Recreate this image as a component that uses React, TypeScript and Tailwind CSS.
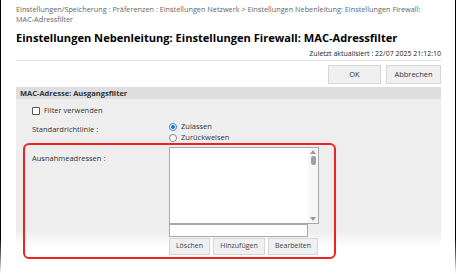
import React from "react";

function Btn({ children, className = "" }: { children: React.ReactNode; className?: string }) {
  return (
    <div
      className={
        "flex items-center justify-center border border-[#d6d6d6] bg-[#f0f0f0] text-[#333] " + className
      }
    >
      {children}
    </div>
  );
}

export default function App() {
  return (
    <div
      className="relative w-[456px] h-[274px] overflow-hidden bg-white text-[#222]"
      style={{ fontFamily: '"Open Sans", "Noto Sans", sans-serif' }}
    >
      {/* frame edges that fade at the bottom */}
      <div className="absolute left-0 top-0 w-px h-full bg-linear-to-b from-black from-85% to-white" />
      <div className="absolute right-0 top-0 w-px h-full bg-linear-to-b from-black from-85% to-white" />

      <div className="pl-[16px] pr-[15px] pt-[4px]">
        <div className="text-[7.3px] leading-[10px] text-[#666]">
          Einstellungen/Speicherung : Präferenzen : Einstellungen Netzwerk &gt; Einstellungen Nebenleitung: Einstellungen Firewall:
          <br />
          MAC-Adressfilter
        </div>
        <div className="mt-[7px] text-[11.1px] leading-[14px] font-bold text-black">
          Einstellungen Nebenleitung: Einstellungen Firewall: MAC-Adressfilter
        </div>
        <div className="mt-[4px] flex justify-end text-[7px] leading-[9px] text-[#222]">
          Zuletzt aktualisiert : 22/07 2025 21:12:10
        </div>
        <div className="mt-[2px] h-px bg-[#e0e0e0]" />
        <div className="mt-[4px] flex justify-end gap-[5px]">
          <Btn className="w-[53px] h-[19px] text-[7.5px]">OK</Btn>
          <Btn className="w-[55px] h-[19px] text-[7.5px]">Abbrechen</Btn>
        </div>

        <div className="mt-[3px] h-[160px] bg-linear-to-b from-[#eeeeee] from-90% to-white">
          <div className="h-[12px] bg-[#dedede] pl-[4px] text-[7.5px] leading-[12px] font-bold text-[#333]">
            MAC-Adresse: Ausgangsfilter
          </div>
          <div className="pl-[16px] pt-[7px] text-[7.5px] text-[#333]">
            <div className="flex items-center gap-[4px] h-[10px]">
              <div className="w-[8px] h-[8px] border border-[#555] bg-white rounded-[1px]" />
              <span>Filter verwenden</span>
            </div>
            <div className="mt-[5px] flex">
              <div className="w-[137px] pt-[3px] leading-[10px]">Standardrichtlinie :</div>
              <div className="flex flex-col leading-[11px]">
                <div className="flex items-center gap-[4px]">
                  <div className="w-[8px] h-[8px] rounded-full border border-[#3b82d6] bg-white flex items-center justify-center">
                    <div className="w-[4px] h-[4px] rounded-full bg-[#1a73d9]" />
                  </div>
                  <span>Zulassen</span>
                </div>
                <div className="flex items-center gap-[4px]">
                  <div className="w-[8px] h-[8px] rounded-full border border-[#888] bg-white" />
                  <span>Zurückweisen</span>
                </div>
              </div>
            </div>
          </div>

          <div className="ml-[7px] mt-[0px] w-[313px] h-[116px] rounded-[6px] border-2 border-[#ee2222] flex pl-[7px] pt-[2px]">
            <div className="w-[137px] pt-[6px] text-[7.5px] leading-[10px] text-[#333]">Ausnahmeadressen :</div>
            <div className="flex flex-col">
              <div className="w-[150px] h-[77px] border border-[#a8a8a8] bg-white flex justify-end">
                <div className="w-[10px] h-full bg-[#f7f7f7] flex flex-col items-center justify-between py-[2px]">
                  <div className="flex flex-col items-center gap-[2px]">
                    <div className="w-0 h-0 border-l-[3px] border-r-[3px] border-b-[4px] border-l-transparent border-r-transparent border-b-[#999]" />
                    <div className="w-[5px] h-[9px] rounded-[2px] bg-[#a0a0a0]" />
                  </div>
                  <div className="w-0 h-0 border-l-[3px] border-r-[3px] border-t-[4px] border-l-transparent border-r-transparent border-t-[#999]" />
                </div>
              </div>
              <div className="w-[139px] h-[13px] border border-[#a8a8a8] bg-white" />
              <div className="mt-[1px] flex gap-[3px]">
                <Btn className="w-[41px] h-[17px] text-[7px] text-[#444]">Löschen</Btn>
                <Btn className="w-[52px] h-[17px] text-[7px] text-[#444]">Hinzufügen</Btn>
                <Btn className="w-[50px] h-[17px] text-[7px] text-[#444]">Bearbeiten</Btn>
              </div>
            </div>
          </div>
        </div>
      </div>
    </div>
  );
}
